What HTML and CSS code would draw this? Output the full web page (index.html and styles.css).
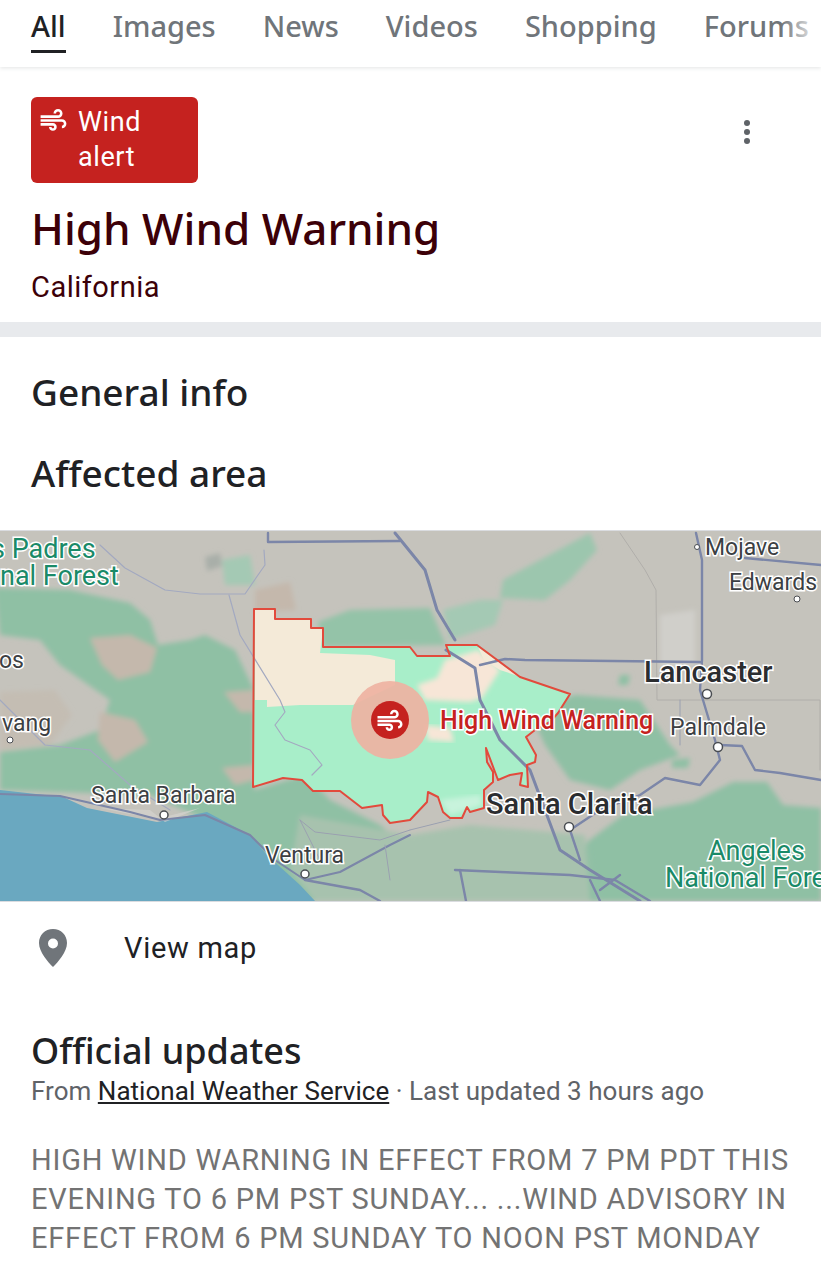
FILE: index.html
```html
<!DOCTYPE html>
<html lang="en">
  <head>
    <meta charset="UTF-8" />
    <meta name="viewport" content="width=device-width, initial-scale=1.0" />
    <title>High Wind Warning</title>
    <link rel="stylesheet" href="styles.css">
  </head>
  <body>
    <svg class="defs" width="0" height="0">
      <symbol id="wind" viewBox="0 0 24 24">
        <path d="M14.5 17c0 1.65-1.35 3-3 3s-3-1.35-3-3h2c0 .55.45 1 1 1s1-.45 1-1-.45-1-1-1H2v-2h9.5c1.65 0 3 1.35 3 3zM19 6.5C19 4.57 17.43 3 15.5 3S12 4.57 12 6.5h2c0-.83.67-1.5 1.5-1.5s1.5.67 1.5 1.5S16.33 8 15.5 8H2v2h13.5c1.93 0 3.5-1.57 3.5-3.5zm-.5 4.5H2v2h16.5c.83 0 1.5.67 1.5 1.5s-.67 1.5-1.5 1.5v2c1.93 0 3.5-1.57 3.5-3.5S20.43 11 18.5 11z" />
      </symbol>
    </svg>

    <nav class="tabs">
      <a class="tab active">All</a>
      <a class="tab">Images</a>
      <a class="tab">News</a>
      <a class="tab">Videos</a>
      <a class="tab">Shopping</a>
      <a class="tab">Forums</a>
    </nav>

    <header class="alert-head">
      <div class="head-top">
        <div class="badge">
          <svg class="badge-icon"><use href="#wind" /></svg>
          <span class="badge-text">Wind alert</span>
        </div>
        <div class="kebab"><i></i><i></i><i></i></div>
      </div>
      <h1>High Wind Warning</h1>
      <p class="region">California</p>
    </header>

    <section class="info">
      <h2>General info</h2>
      <h2 class="area-title">Affected area</h2>
    </section>

    <div class="map">
      <svg class="map-svg" viewBox="0 531 821 370" width="821" height="370">
        <defs>
          <filter id="soft" x="-5%" y="-5%" width="110%" height="110%"><feGaussianBlur stdDeviation="2.4" /></filter>
          <filter id="softer"><feGaussianBlur stdDeviation="0.6" /></filter>
        </defs>
        <rect x="0" y="531" width="821" height="370" fill="#c5c3bc" />

        <!-- terrain -->
        <g filter="url(#soft)">
          <path fill="#c4b8ac" d="M255 590 L290 582 L296 610 L255 612Z" />
          <path fill="#8fc0a4" d="M-5 588 L70 590 L130 603 L150 620 L158 645 L190 640 L205 635 L235 650 L254 690 L254 790 L305 775 L330 800 L380 825 L410 850 L520 860 L583 858 L587 842 L600 901 L300 901 L240 835 L150 795 L0 790 L0 752 L60 745 L100 730 L110 700 L60 665 L40 640 L0 635Z" />
          <path fill="#c4b8ac" d="M90 638 L130 635 L157 648 L150 672 L118 680 L102 665Z" />
          <path fill="#c4bdb3" d="M0 692 L55 690 L72 715 L50 745 L0 750Z" />
          <path fill="#c4b8ac" d="M100 712 L135 720 L148 742 L115 762 L98 740Z" />
          <path fill="#c4b8ac" d="M224 692 L254 690 L254 712 L240 712Z" />
          <path fill="#c4b8ac" d="M222 768 L254 765 L254 780 L235 785Z" />
          <path fill="#a7c2ae" d="M300 815 L410 835 L470 825 L585 835 L590 901 L315 901 L290 870Z" />
          <path fill="#94c3a8" d="M318 622 L350 610 L430 608 L446 645 L323 647Z" />
          <path fill="#8fc0a4" d="M530 712 L575 695 L640 700 L670 745 L680 755 L640 770 L610 790 L570 780 L545 745Z" />
          <path fill="#9cc6ae" d="M503 580 L540 560 L590 533 L597 550 L570 580 L545 600 L500 598Z" />
          <path fill="#a4c9b4" d="M443 610 L480 600 L503 600 L495 625 L450 640Z" />
          <path fill="#8fc0a4" d="M587 842 L623 815 L693 802 L733 782 L767 782 L783 805 L821 808 L821 901 L600 901Z" />
          <path fill="#d0cfca" d="M660 615 L695 610 L695 665 L660 672Z" />
          <path fill="#a9afa9" d="M205 557 L220 553 L222 566 L207 571Z" />
          <path fill="#a4c9b4" d="M222 560 L250 555 L255 585 L225 585Z" />
          <path fill="#8fc0a4" d="M620 675 L630 675 L628 685 L618 685Z" />
          <path fill="#8fc0a4" d="M672 760 L690 758 L688 768 L672 768Z" />
        </g>

        <!-- water -->
        <path filter="url(#softer)" fill="#6aa8c0" d="M0 790 L63 797 L87 808 L157 822 L207 812 L250 835 L267 855 L300 885 L315 901 L0 901Z" />
        <path fill="#d4d3cf" opacity=".7" d="M100 808 L150 810 L165 822 L200 808 L160 818 L130 814Z" />

        <!-- alert area -->
        <path fill="#a8eec9" d="M254 609 L275 609 L275 619 L311 619 L311 628 L323 628 L323 647 L410 647 L417 656 L450 656 L446 645 L477 645 L520 677 L570 694 L558 713 L550 722 L535 730 L526 737 L536 755 L535 762 L527 765 L528 787 L520 785 L522 773 L510 775 L498 780 L486 748 L487 762 L493 772 L493 782 L484 790 L484 808 L470 812 L467 807 L462 818 L450 818 L443 812 L438 797 L428 792 L427 802 L410 820 L390 823 L383 815 L382 805 L362 808 L340 791 L313 791 L302 780 L283 778 L253 787Z" />
        <path fill="#f4ead8" filter="url(#softer)" d="M255 610 L275 610 L275 620 L311 620 L311 629 L323 629 L320 653 L370 655 L395 660 L395 685 L353 705 L300 705 L267 707 L267 700 L255 700Z" />
        <path fill="#f7e6d7" filter="url(#soft)" d="M445 660 L478 650 L500 670 L482 698 L470 702 L425 700 L417 685 L437 678Z" />
        <path fill="#f7e6d7" filter="url(#soft)" d="M425 725 L450 728 L454 742 L428 740Z" />
        <path fill="#f4ead8" d="M478 647 L518 676 L500 670 L484 660Z" />
        <path fill="#c8f3dc" filter="url(#soft)" d="M440 800 L480 795 L482 805 L450 815Z" />
        <circle cx="390" cy="720" r="39" fill="#eeb2a2" opacity=".92" />

        <!-- roads and rivers -->
        <g fill="none" stroke-linecap="round" stroke-linejoin="round" filter="url(#softer)">
          <g stroke="#a3a9c0" stroke-width="1.2">
            <path d="M100 545 L125 568 L165 590 L200 594 L245 594 L258 575 L265 565 L264 550" />
            <path d="M229 595 L240 635 L280 700 L285 712 L275 725 L285 740 L310 750 L322 765 L312 775" />
            <path d="M0 700 L10 710 L45 745 L90 750 L130 785 L170 810" />
          </g>
          <path stroke="#b0aeaa" stroke-width="1" d="M620 533 L645 570 L656 590 L657 700 L820 700 L820 770" />
          <g stroke="#7b86a8" stroke-width="2.4">
            <path d="M268 533 L268 542 L400 541" />
            <path d="M395 533 L425 570 L437 610 L455 640" stroke-width="3" />
            <path d="M446 650 L475 668 L480 700 L500 740 L530 770 L545 810 L560 850 L590 870 L640 901" stroke-width="3" />
            <path d="M480 665 L505 659 L525 660 L700 662" />
            <path d="M696 533 L702 560 L702 660 L700 690 L715 740 L720 760 L700 785 L665 778 L640 795 L600 810 L570 830 L580 860" />
            <path d="M720 745 L742 746 L755 770 L780 773 L821 780" />
            <path d="M745 558 L821 565" />
            <path d="M0 794 L60 796 L130 812 L160 820 L205 815 L250 835 L275 860 L305 880 L340 872 L390 845 L410 835" stroke-width="2" />
            <path d="M305 880 L360 890 L380 901" />
            <path d="M455 870 L570 875 L615 880 L650 901" />
            <path d="M460 870 L466 901" />
            <path d="M590 880 L600 901 M620 875 L600 890" />
          </g>
          <g stroke="#9aa0b0" stroke-width="1">
            <path d="M410 830 L380 840 L315 832 L300 820 M410 830 L450 820 M385 845 L390 880 M300 820 L320 860" />
            <path d="M680 700 L680 745" />
          </g>
        </g>

        <!-- alert outline -->
        <path fill="none" stroke="#e24a3c" stroke-width="2" stroke-linejoin="round" d="M254 609 L275 609 L275 619 L311 619 L311 628 L323 628 L323 647 L410 647 L417 656 L450 656 L446 645 L477 645 L520 677 L570 694 L558 713 L550 722 L535 730 L526 737 L536 755 L535 762 L527 765 L528 787 L520 785 L522 773 L510 775 L498 780 L486 748 L487 762 L493 772 L493 782 L484 790 L484 808 L470 812 L467 807 L462 818 L450 818 L443 812 L438 797 L428 792 L427 802 L410 820 L390 823 L383 815 L382 805 L362 808 L340 791 L313 791 L302 780 L283 778 L253 787Z" />

        <circle cx="390" cy="720" r="19" fill="#c5221f" />
        <use href="#wind" x="375" y="706" width="30" height="30" fill="#fff" />

        <!-- town dots -->
        <g fill="#fff" stroke="#4a4d52" stroke-width="1.5">
          <circle cx="164" cy="815" r="4" />
          <circle cx="305" cy="874" r="4" />
          <circle cx="569" cy="827" r="4.5" />
          <circle cx="707" cy="694" r="4.5" />
          <circle cx="718" cy="747" r="4.5" />
          <circle cx="697" cy="547" r="2.5" stroke-width="1" />
          <circle cx="797" cy="599" r="3" stroke-width="1" />
          <circle cx="10" cy="740" r="3" stroke-width="1" />
        </g>

        <!-- labels -->
        <text class="lbl lbl-green" x="-9" y="558">s Padres</text>
        <text class="lbl lbl-green" x="0" y="585">nal Forest</text>
        <text class="lbl" x="-1" y="668">os</text>
        <text class="lbl" x="2" y="731">vang</text>
        <text class="lbl lbl-sm" x="91" y="803">Santa Barbara</text>
        <text class="lbl" x="265" y="863">Ventura</text>
        <text class="lbl lbl-red" x="440" y="729">High Wind Warning</text>
        <text class="lbl lbl-big" x="486" y="814">Santa Clarita</text>
        <text class="lbl lbl-big" x="644" y="682">Lancaster</text>
        <text class="lbl" x="670" y="735">Palmdale</text>
        <text class="lbl" x="705" y="555">Mojave</text>
        <text class="lbl" x="729" y="590">Edwards</text>
        <text class="lbl lbl-green" x="708" y="860">Angeles</text>
        <text class="lbl lbl-green" x="665" y="887">National Forest</text>
      </svg>
    </div>

    <a class="view-map">
      <svg class="pin" viewBox="0 0 30 38">
        <path fill-rule="evenodd" d="M15 0C7 0 1 6 1 14c0 9 9 19 14 24 5-5 14-15 14-24C29 6 23 0 15 0zm0 9.500a5 5 0 1 1 0 10 5 5 0 0 1 0-10z" />
      </svg>
      <span>View map</span>
    </a>

    <section class="updates">
      <h3>Official updates</h3>
      <p class="source">From <a>National Weather Service</a> · Last updated 3 hours ago</p>
      <p class="update-text">HIGH WIND WARNING IN EFFECT FROM 7 PM PDT THIS EVENING TO 6 PM PST SUNDAY... ...WIND ADVISORY IN EFFECT FROM 6 PM SUNDAY TO NOON PST MONDAY</p>
    </section>
  </body>
</html>
```

FILE: styles.css
```css
* {
  margin: 0;
  padding: 0;
  box-sizing: border-box;
}

body {
  background: #fff;
  font-family: Roboto, "Liberation Sans", sans-serif;
  color: #202124;
  height: 1280px;
  overflow: hidden;
}

.defs {
  display: block;
}

.tabs {
  position: relative;
  display: flex;
  gap: 47px;
  height: 67px;
  padding-left: 31px;
  overflow: hidden;
  box-shadow: 0 1px 4px rgba(60, 64, 67, 0.14);
  font-family: "Noto Sans", Roboto, sans-serif;
  font-size: 29px;
  font-weight: 500;
}

.tabs::after {
  content: "";
  position: absolute;
  top: 0;
  right: 0;
  bottom: 0;
  width: 40px;
  background: linear-gradient(90deg, rgba(255, 255, 255, 0), #fff);
}

.tab {
  height: 53px;
  padding-top: 7px;
  line-height: 38px;
  color: #70757a;
  white-space: nowrap;
  flex-shrink: 0;
}

.tab.active {
  color: #202124;
  border-bottom: 3px solid #202124;
}

.alert-head {
  height: 255px;
  padding: 30px 31px 0;
}

.head-top {
  display: flex;
  justify-content: space-between;
  align-items: flex-start;
}

.badge {
  display: flex;
  width: 167px;
  height: 86px;
  padding: 8px 7px;
  gap: 9px;
  background: #c5221f;
  border-radius: 6px;
  color: #fff;
}

.badge-icon {
  width: 31px;
  height: 31px;
  fill: #fff;
  flex-shrink: 0;
}

.badge-text {
  width: 90px;
  font-size: 27px;
  line-height: 35px;
  letter-spacing: 0.6px;
}

.kebab {
  display: flex;
  flex-direction: column;
  gap: 3px;
  margin: 23px 40px 0 0;
}

.kebab i {
  display: block;
  width: 6px;
  height: 6px;
  border-radius: 50%;
  background: #5f6368;
}

h1 {
  margin-top: 17px;
  font-family: "Noto Sans", Roboto, sans-serif;
  font-size: 44px;
  font-weight: 500;
  line-height: 56px;
  color: #3c0008;
}

.region {
  margin-top: 14px;
  font-size: 29px;
  line-height: 34px;
  letter-spacing: 0.5px;
  color: #3c0008;
}

.info {
  height: 208px;
  padding: 33px 31px 0;
  border-top: 15px solid #e8eaed;
}

h2 {
  font-family: "Noto Sans", Roboto, sans-serif;
  font-size: 37px;
  font-weight: 500;
  line-height: 44px;
  color: #202124;
}

.area-title {
  margin-top: 37px;
}

.map {
  height: 372px;
  border-top: 1px solid #dadce0;
  border-bottom: 1px solid #dadce0;
}

.map-svg {
  display: block;
}

.lbl {
  font-family: Roboto, sans-serif;
  font-size: 23px;
  fill: #3c4043;
  stroke: #fff;
  stroke-width: 3px;
  paint-order: stroke;
}

.lbl-sm {
  font-size: 23px;
}

.lbl-big {
  font-size: 29px;
  font-weight: 500;
  fill: #2b2d30;
}

.lbl-green {
  font-size: 27px;
  fill: #1a8a68;
}

.lbl-red {
  font-size: 25px;
  font-weight: 500;
  fill: #c5221f;
}

.view-map {
  display: flex;
  align-items: center;
  height: 94px;
  padding-left: 38px;
  gap: 56px;
  padding-bottom: 3px;
  font-size: 29px;
  letter-spacing: 0.7px;
  color: #202124;
}

.pin {
  width: 30px;
  height: 38px;
  fill: #70757a;
}

.updates {
  padding: 33px 31px 0;
}

h3 {
  font-family: "Noto Sans", Roboto, sans-serif;
  font-size: 36px;
  font-weight: 500;
  line-height: 44px;
  color: #202124;
}

.source {
  font-size: 26px;
  line-height: 36px;
  letter-spacing: 0.03px;
  color: #5f6368;
}

.source a {
  color: #202124;
  text-decoration: underline;
}

.update-text {
  margin-top: 32px;
  font-size: 29px;
  line-height: 39px;
  letter-spacing: 0.78px;
  color: #737373;
}
```
